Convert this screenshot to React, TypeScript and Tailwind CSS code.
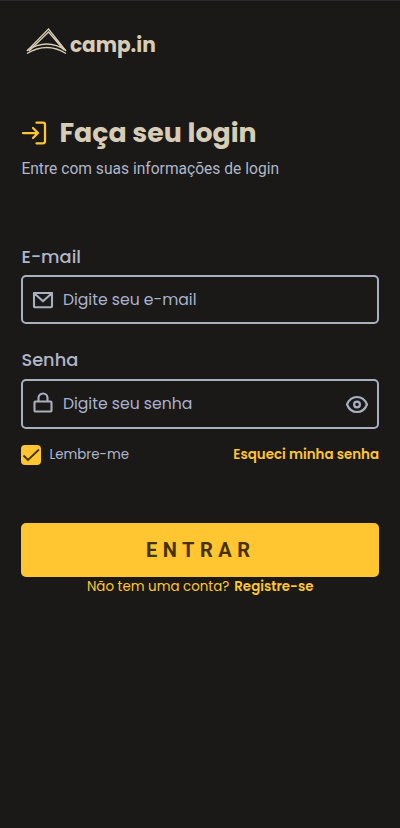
import type { ReactNode } from 'react';

function Logo() {
  return (
    <div className="flex h-10 items-start pl-[4.500px] text-[#d7ccb5]">
      <svg className="mt-1 h-8 w-11 shrink-0" viewBox="0 0 44 32" fill="none" stroke="currentColor">
        <path d="M1 23 22.500 1 40 23M3 23 22.500 4 38 22" strokeWidth="1.300" />
        <path d="M1 22.500Q21 9.500 40 22.500M1 25.500Q21 13.500 40 25.500" strokeWidth="1.400" />
      </svg>
      <span className="mt-[5px] text-[20.100px] leading-8 font-bold">camp.in</span>
    </div>
  );
}

interface FieldProps {
  label: string;
  icon: ReactNode;
  placeholder: string;
  type: string;
  boxHeight: string;
  children?: ReactNode;
}

function Field({ label, icon, placeholder, type, boxHeight, children }: FieldProps) {
  return (
    <label className="flex flex-col">
      <span className="text-[17.800px] leading-[27px] font-medium">{label}</span>
      <span className={`flex items-center rounded-[5px] border-2 border-[#a8b0c0] pr-2 pl-[9px] ${boxHeight}`}>
        {icon}
        <input className="ml-[6.500px] min-w-0 flex-1 bg-transparent text-[15.650px] outline-none placeholder:text-[#a8b3cf]" type={type} placeholder={placeholder} />
        {children}
      </span>
    </label>
  );
}

export default function App() {
  return (
    <main className="flex h-[828px] w-full flex-col border-t border-[#29282b] bg-[#1a1917] pr-[21px] pl-[21.400px] pt-[23px] font-['Poppins','Inter',sans-serif] text-[#afb6c9]">
      <Logo />
      <header className="mt-[50px]">
        <div className="flex h-[39px] items-center text-[#d7ccb5]">
          <svg className="mb-[2px] h-6 w-[26px] shrink-0 text-[#ffc632]" viewBox="0 0 26 24" fill="none" stroke="currentColor" strokeWidth="2.250" strokeLinecap="round" strokeLinejoin="round">
            <path d="M2 12h15m-5-5 5 5-5 5M15.500 1.700H22q2 0 2 2v16.600q0 2-2 2h-6.500" />
          </svg>
          <h1 className="mb-[2px] ml-3 text-[26.800px] leading-[38px] font-bold whitespace-nowrap">Faça seu login</h1>
        </div>
        <p className="mt-1 font-['Roboto'] text-[15.600px] leading-6">Entre com suas informações de login</p>
      </header>
      <form className="mt-[62px] flex flex-col">
        <Field
          label="E-mail"
          type="email"
          placeholder="Digite seu e-mail"
          boxHeight="mt-[5px] h-[49px]"
          icon={
            <svg className="h-6 w-6 shrink-0" viewBox="0 0 24 24" fill="none" stroke="#a8b0c0" strokeWidth="2.1" strokeLinecap="round" strokeLinejoin="round">
              <path d="M2 5h18v13.300q0 1-1 1H3q-1 0-1-1ZM2 5l9 8.300L20 5" />
            </svg>
          }
        />
        <div className="mt-[22px]">
          <Field
            label="Senha"
            type="password"
            placeholder="Digite seu senha"
            boxHeight="mt-[6px] h-[50px]"
            icon={
              <svg className="h-6 w-6 shrink-0" viewBox="0 0 24 24" fill="none" stroke="#a8b0c0" strokeWidth="2.1" strokeLinejoin="round">
                <rect x="2.500" y="9.500" width="17" height="10" rx="1" />
                <path d="M6.500 9.500V6a4.500 4.500 0 0 1 9 0V9.500" />
              </svg>
            }
          >
            <svg className="h-6 w-6 shrink-0" viewBox="0 0 24 24" fill="none" stroke="#a8b0c0" strokeWidth="2.2" strokeLinejoin="round">
              <path d="M2 12.500Q5 5 12 5T22 12.500Q19 20 12 20T2 12.500Z" />
              <circle cx="12" cy="12.500" r="2.9" />
            </svg>
          </Field>
        </div>
        <div className="mt-4 flex h-5 items-center justify-between text-[13.400px] leading-5">
          <label className="flex items-center gap-2">
            <span className="flex h-5 w-5 items-center justify-center rounded-[4px] bg-[#ffc632]">
              <svg className="h-5 w-5" viewBox="0 0 20 20" fill="none" stroke="#453200" strokeWidth="1.8">
                <path d="m2.500 10.500 4.500 4.500L18 4.500" />
              </svg>
            </span>
            <span className="-mt-px">Lembre-me</span>
          </label>
          <a className="-mt-px font-semibold text-[#ffc632]">Esqueci minha senha</a>
        </div>
        <button type="button" className="mt-[58px] h-[54px] rounded-[5px] bg-[#ffc632] pl-px font-['Roboto'] text-[20px] font-bold tracking-[5.500px] text-[#453200]">ENTRAR</button>
        <p className="flex h-[19px] items-center justify-center gap-[5px] text-[13.400px] leading-[19px] text-[#ffc632]">
          <span>Não tem uma conta?</span>
          <a className="font-semibold">Registre-se</a>
        </p>
      </form>
    </main>
  );
}
